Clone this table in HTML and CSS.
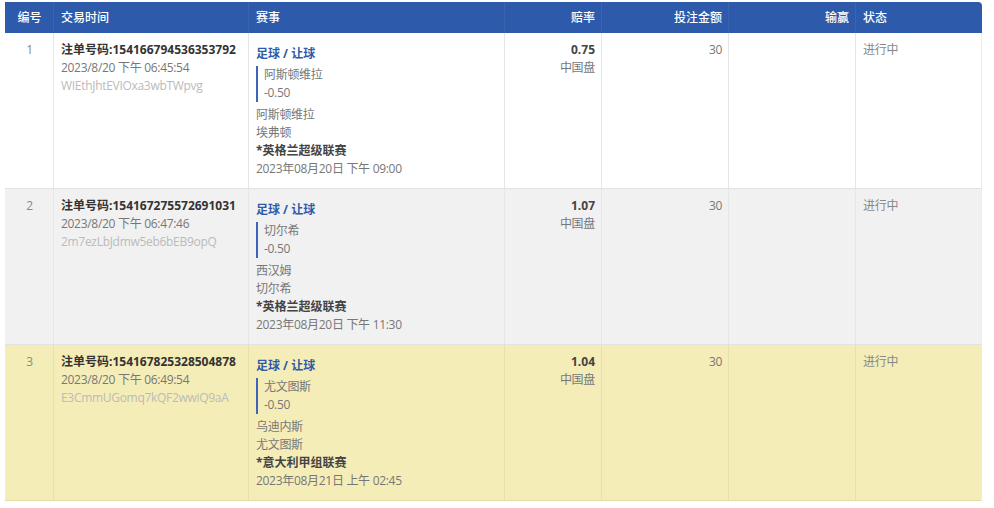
FILE: index.html
```html
<!DOCTYPE html>
<html lang="zh-CN">
<head>
<meta charset="utf-8">
<title>注单</title>
<link rel="stylesheet" href="styles.css">
</head>
<body>
<div class="wrap">
<table class="bets">
  <colgroup>
    <col class="c-no"><col class="c-time"><col class="c-event"><col class="c-odds"><col class="c-amt"><col class="c-win"><col class="c-status">
  </colgroup>
  <thead>
    <tr>
      <th class="center">编号</th>
      <th>交易时间</th>
      <th>赛事</th>
      <th class="right">赔率</th>
      <th class="right">投注金额</th>
      <th class="right">输赢</th>
      <th>状态</th>
    </tr>
  </thead>
  <tbody>
    <tr class="row-white">
      <td class="center num">1</td>
      <td>
        <div class="order">注单号码:154166794536353792</div>
        <div class="date">2023/8/20 下午 06:45:54</div>
        <div class="hash">WIEthJhtEVIOxa3wbTWpvg</div>
      </td>
      <td>
        <div class="title">足球 / 让球</div>
        <div class="pick"><div>阿斯顿维拉</div><div>-0.50</div></div>
        <div class="teams"><div>阿斯顿维拉</div><div>埃弗顿</div><div class="league">*英格兰超级联赛</div><div>2023年08月20日 下午 09:00</div></div>
      </td>
      <td class="right"><div class="odds">0.75</div><div class="market">中国盘</div></td>
      <td class="right amt">30</td>
      <td></td>
      <td class="status">进行中</td>
    </tr>
    <tr class="row-gray">
      <td class="center num">2</td>
      <td>
        <div class="order">注单号码:154167275572691031</div>
        <div class="date">2023/8/20 下午 06:47:46</div>
        <div class="hash">2m7ezLbJdmw5eb6bEB9opQ</div>
      </td>
      <td>
        <div class="title">足球 / 让球</div>
        <div class="pick"><div>切尔希</div><div>-0.50</div></div>
        <div class="teams"><div>西汉姆</div><div>切尔希</div><div class="league">*英格兰超级联赛</div><div>2023年08月20日 下午 11:30</div></div>
      </td>
      <td class="right"><div class="odds">1.07</div><div class="market">中国盘</div></td>
      <td class="right amt">30</td>
      <td></td>
      <td class="status">进行中</td>
    </tr>
    <tr class="row-yellow">
      <td class="center num">3</td>
      <td>
        <div class="order">注单号码:154167825328504878</div>
        <div class="date">2023/8/20 下午 06:49:54</div>
        <div class="hash">E3CmmUGomq7kQF2wwiQ9aA</div>
      </td>
      <td>
        <div class="title">足球 / 让球</div>
        <div class="pick"><div>尤文图斯</div><div>-0.50</div></div>
        <div class="teams"><div>乌迪内斯</div><div>尤文图斯</div><div class="league">*意大利甲组联赛</div><div>2023年08月21日 上午 02:45</div></div>
      </td>
      <td class="right"><div class="odds">1.04</div><div class="market">中国盘</div></td>
      <td class="right amt">30</td>
      <td></td>
      <td class="status">进行中</td>
    </tr>
  </tbody>
</table>
</div>
</body>
</html>
```

FILE: styles.css
```css
html, body {
  margin: 0;
  padding: 0;
  background: #fff;
}
body {
  font-family: "Open Sans", "Noto Sans CJK SC", sans-serif;
  font-size: 12px;
  color: #777;
}
.wrap {
  padding: 2px 12px 0 5px;
}
.bets {
  width: 977px;
  border-collapse: separate;
  border-spacing: 0;
  table-layout: fixed;
}
.c-no { width: 48px; }
.c-time { width: 195px; }
.c-event { width: 256px; }
.c-odds { width: 97px; }
.c-amt { width: 127px; }
.c-win { width: 127px; }
.c-status { width: 127px; }

.bets th {
  background: #2e5aac;
  color: #fff;
  font-weight: 500;
  text-align: left;
  height: 31px;
  padding: 0 6px 0 7px;
  line-height: 31px;
  border-left: 1px solid #3a64b2;
}
.bets th:first-child { border-left: none; }
.bets th:last-child { border-top-right-radius: 4px; }

.bets td {
  vertical-align: top;
  padding: 8px 6px 10px 7px;
  line-height: 18px;
  letter-spacing: -0.3px;
  border-bottom: 1px solid #e2e2e2;
  border-left: 1px solid #e6e6e6;
}
.bets td:first-child { border-left: none; }
.bets td:last-child { border-right: 1px solid #ececec; }

.center { text-align: center !important; }
.right { text-align: right !important; }

.row-white td { background: #fff; }
.row-gray td { background: #f1f1f1; }
.row-yellow td { background: #f5edb7; border-bottom-color: #e4dca6; border-left-color: #e8dfae; }

.num { color: #888; }
.order { color: #333; font-weight: 700; letter-spacing: 0; }
.date { color: #777; }
.hash { color: #bbb; }

.title {
  margin-top: 4px;
  color: #2e5aa8;
  font-weight: 700;
  letter-spacing: 0;
}
.pick {
  margin-top: 3px;
  border-left: 2px solid #3d64b8;
  padding-left: 6px;
  color: #777;
}
.teams {
  margin-top: 4px;
  color: #777;
}
.league {
  color: #444;
  font-weight: 700;
  letter-spacing: 0;
}
.odds { color: #444; font-weight: 700; letter-spacing: 0; }
.market { color: #777; }
.amt { color: #777; }
.status { color: #888; }
```
